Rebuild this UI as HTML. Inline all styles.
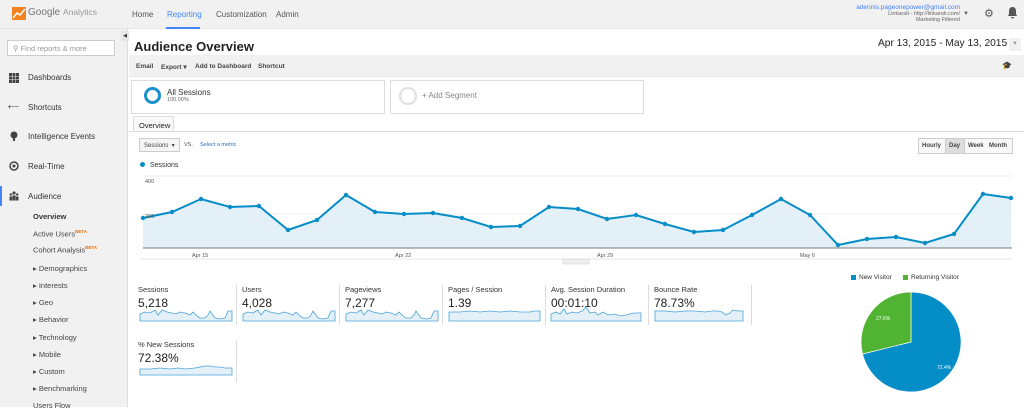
<!DOCTYPE html>
<html><head><meta charset="utf-8"><style>
*{margin:0;padding:0;box-sizing:border-box}
body{width:1024px;height:407px;overflow:hidden;font-family:"Liberation Sans",Arial,sans-serif;background:#fff;position:relative;color:#333}
.a{position:absolute}
.top{left:0;top:0;width:1024px;height:29px;background:#f1f1f1;border-bottom:1px solid #e5e5e5}
.nav{font-size:8px;color:#555;top:10px}
.side{left:0;top:29px;width:128px;height:378px;background:#f1f1f1;border-right:1px solid #ddd}
.si{font-size:8px;color:#333;left:28px}
.sub{font-size:7.5px;color:#444;left:33px}
.ic{left:9px;width:10px;height:10px}
.m{font-size:7.5px;color:#333}
.v{font-size:12px;color:#222}
.sep{width:1px;background:#ddd}
</style></head><body>
<div class="a top"></div>
<svg class="a" style="left:12px;top:7px" width="14" height="13" viewBox="0 0 14 13"><rect width="14" height="13" fill="#f58220"/><polyline points="1,11 5,6 8,8 13,2" stroke="#fff" stroke-width="1.5" fill="none"/></svg>
<div class="a" style="left:28px;top:7px;font-size:10px;color:#777">Google <span style="font-size:8.5px;color:#999">Analytics</span></div>
<div class="a nav" style="left:132px">Home</div>
<div class="a nav" style="left:167px;color:#4285f4">Reporting</div>
<div class="a" style="left:166px;top:27px;width:34px;height:2px;background:#4285f4"></div>
<div class="a nav" style="left:216px">Customization</div>
<div class="a nav" style="left:276px">Admin</div>
<div class="a" style="right:64px;top:4px;font-size:6.5px;color:#4285f4;text-align:right">adennis.pageonepower@gmail.com</div>
<div class="a" style="right:64px;top:11px;font-size:5.5px;color:#666;text-align:right">Linkarati - http://linkarati.com/<br>Marketing Filtered</div>
<div class="a" style="left:963px;top:11px;font-size:6px;color:#666">▼</div>
<div class="a" style="left:984px;top:7px;font-size:11px;color:#555">⚙</div>
<svg class="a" style="left:1007px;top:6px" width="11" height="13" viewBox="0 0 11 13"><path d="M5.5 1C3 1 2 3 2 5v3L1 10h9L9 8V5C9 3 8 1 5.5 1zM4 11h3a1.5 1.5 0 0 1-3 0z" fill="#555"/></svg>

<div class="a side"></div>
<div class="a" style="left:121px;top:31px;width:8px;height:10px;background:#e5e5e5;font-size:5px;color:#333;text-align:center;line-height:10px">◀</div>
<div class="a" style="left:7px;top:40px;width:108px;height:16px;background:#fff;border:1px solid #ccc;font-size:7.5px;color:#999;padding:3px 0 0 5px">⚲ Find reports &amp; more</div>
<svg class="a ic" style="top:73px" viewBox="0 0 10 10" fill="#444"><rect x="0" y="0" width="3" height="3"/><rect x="3.5" y="0" width="3" height="3"/><rect x="7" y="0" width="3" height="3"/><rect x="0" y="3.5" width="3" height="3"/><rect x="3.5" y="3.5" width="3" height="3"/><rect x="7" y="3.5" width="3" height="3"/><rect x="0" y="7" width="3" height="3"/><rect x="3.5" y="7" width="3" height="3"/><rect x="7" y="7" width="3" height="3"/></svg>
<div class="a si" style="top:73px">Dashboards</div>
<div class="a" style="left:8px;top:102px;font-size:8px;color:#444">⟵</div>
<div class="a si" style="top:103px">Shortcuts</div>
<svg class="a ic" style="top:131px" viewBox="0 0 10 10"><circle cx="5" cy="4" r="3.5" fill="#444"/><rect x="4" y="7" width="2" height="3" fill="#444"/></svg>
<div class="a si" style="top:132px">Intelligence Events</div>
<svg class="a ic" style="top:161px" viewBox="0 0 10 10"><circle cx="5" cy="5" r="4" fill="none" stroke="#444" stroke-width="1.5"/><circle cx="5" cy="5" r="1.5" fill="#444"/></svg>
<div class="a si" style="top:162px">Real-Time</div>
<div class="a" style="left:0;top:186px;width:2px;height:20px;background:#4285f4"></div>
<svg class="a ic" style="top:191px" viewBox="0 0 10 10" fill="#444"><circle cx="5" cy="2" r="1.6"/><circle cx="1.8" cy="3.5" r="1.2"/><circle cx="8.2" cy="3.5" r="1.2"/><rect x="3.3" y="4.5" width="3.4" height="5"/><rect x="0.5" y="5.5" width="2.5" height="4"/><rect x="7" y="5.5" width="2.5" height="4"/></svg>
<div class="a si" style="top:192px">Audience</div>
<div class="a sub" style="top:212px;font-weight:bold;color:#333">Overview</div>
<div class="a sub" style="top:229px">Active Users<sup style="font-size:4.5px;color:#e8710a;font-weight:bold">BETA</sup></div>
<div class="a sub" style="top:245px">Cohort Analysis<sup style="font-size:4.5px;color:#e8710a;font-weight:bold">BETA</sup></div>
<div class="a sub" style="top:264px">▸ Demographics</div>
<div class="a sub" style="top:281px">▸ Interests</div>
<div class="a sub" style="top:298px">▸ Geo</div>
<div class="a sub" style="top:315px">▸ Behavior</div>
<div class="a sub" style="top:333px">▸ Technology</div>
<div class="a sub" style="top:350px">▸ Mobile</div>
<div class="a sub" style="top:367px">▸ Custom</div>
<div class="a sub" style="top:384px">▸ Benchmarking</div>
<div class="a sub" style="top:401px">Users Flow</div>

<div class="a" style="left:134px;top:39px;font-size:13px;font-weight:bold;color:#222">Audience Overview</div>
<div class="a" style="left:878px;top:38px;font-size:10.2px;color:#222;white-space:nowrap">Apr 13, 2015 - May 13, 2015</div>
<div class="a" style="left:1009px;top:38px;width:12px;height:13px;background:#f1f1f1;font-size:6px;color:#999;text-align:center;line-height:13px">▼</div>
<div class="a" style="left:129px;top:55px;width:895px;height:22px;background:#f1f1f1;border-bottom:1px solid #e5e5e5"></div>
<div class="a" style="left:136px;top:63px;font-size:6.5px;font-weight:bold;color:#444">Email</div>
<div class="a" style="left:161px;top:63px;font-size:6.5px;font-weight:bold;color:#444">Export ▾</div>
<div class="a" style="left:195px;top:63px;font-size:6.5px;font-weight:bold;color:#444">Add to Dashboard</div>
<div class="a" style="left:258px;top:63px;font-size:6.5px;font-weight:bold;color:#444">Shortcut</div>
<div class="a" style="left:1002px;top:61px;font-size:8px;color:#444">🎓</div>

<div class="a" style="left:131px;top:80px;width:254px;height:34px;border:1px solid #ddd"></div>
<div class="a" style="left:144px;top:87px;width:17px;height:17px;border:3px solid #1a8fd0;border-radius:50%"></div>
<div class="a" style="left:167px;top:88px;font-size:8px;color:#333">All Sessions</div>
<div class="a" style="left:167px;top:97px;font-size:5.5px;color:#666">100.00%</div>
<div class="a" style="left:390px;top:80px;width:254px;height:34px;border:1px solid #ddd"></div>
<div class="a" style="left:399px;top:87px;width:18px;height:18px;border:2px solid #ddd;border-radius:50%"></div>
<div class="a" style="left:422px;top:91px;font-size:8px;color:#888">+ Add Segment</div>
<div class="a" style="left:133px;top:116px;width:41px;height:16px;border:1px solid #ddd;border-bottom:none;background:#f8f8f8;font-size:7.5px;color:#222;padding:4px 0 0 5px">Overview</div>
<div class="a" style="left:129px;top:131px;width:895px;height:1px;background:#ddd"></div>

<div class="a" style="left:139px;top:138px;width:41px;height:14px;border:1px solid #ccc;background:#f5f5f5;font-size:6px;color:#444;padding:3px 0 0 4px">Sessions &nbsp;▾</div>
<div class="a" style="left:184px;top:142px;font-size:5.5px;color:#555">VS.</div>
<div class="a" style="left:200px;top:142px;font-size:5.5px;color:#2a6ebb">Select a metric</div>
<div class="a" style="left:918px;top:138px;width:95px;height:16px;border:1px solid #ccc;background:#f8f8f8"></div>
<div class="a" style="left:922px;top:143px;font-size:6px;font-weight:bold;color:#444">Hourly</div>
<div class="a" style="left:945px;top:138px;width:20px;height:16px;background:#ddd;border:1px solid #ccc"></div>
<div class="a" style="left:949px;top:143px;font-size:6px;font-weight:bold;color:#444">Day</div>
<div class="a" style="left:968px;top:143px;font-size:6px;font-weight:bold;color:#444">Week</div>
<div class="a" style="left:989px;top:143px;font-size:6px;font-weight:bold;color:#444">Month</div>
<div class="a" style="left:140px;top:162px;width:5px;height:5px;border-radius:50%;background:#058dc7"></div>
<div class="a" style="left:150px;top:162px;font-size:7px;color:#333">Sessions</div>

<svg class="a" style="left:0;top:0" width="1024" height="270">
<line x1="143" y1="176" x2="1012" y2="176" stroke="#eee"/>
<line x1="143" y1="214" x2="1012" y2="214" stroke="#eee"/>
<polygon fill="#e4f0f8" points="143,248 143,218 172,212 201,199 230,207 259,206 288,230 317,220 346,195 375,212 404,214 433,213 462,218 491,227 520,226 549,207 578,209 607,219 636,215 665,224 694,232 723,230 752,215 781,199 810,215 838,245 867,239 896,237 925,243 954,234 983,194 1011,198 1011,248"/>
<polyline fill="none" stroke="#058dc7" stroke-width="2" points="143,218 172,212 201,199 230,207 259,206 288,230 317,220 346,195 375,212 404,214 433,213 462,218 491,227 520,226 549,207 578,209 607,219 636,215 665,224 694,232 723,230 752,215 781,199 810,215 838,245 867,239 896,237 925,243 954,234 983,194 1011,198"/>
<g fill="#058dc7"><circle cx="143" cy="218" r="2.2"/><circle cx="172" cy="212" r="2.2"/><circle cx="201" cy="199" r="2.2"/><circle cx="230" cy="207" r="2.2"/><circle cx="259" cy="206" r="2.2"/><circle cx="288" cy="230" r="2.2"/><circle cx="317" cy="220" r="2.2"/><circle cx="346" cy="195" r="2.2"/><circle cx="375" cy="212" r="2.2"/><circle cx="404" cy="214" r="2.2"/><circle cx="433" cy="213" r="2.2"/><circle cx="462" cy="218" r="2.2"/><circle cx="491" cy="227" r="2.2"/><circle cx="520" cy="226" r="2.2"/><circle cx="549" cy="207" r="2.2"/><circle cx="578" cy="209" r="2.2"/><circle cx="607" cy="219" r="2.2"/><circle cx="636" cy="215" r="2.2"/><circle cx="665" cy="224" r="2.2"/><circle cx="694" cy="232" r="2.2"/><circle cx="723" cy="230" r="2.2"/><circle cx="752" cy="215" r="2.2"/><circle cx="781" cy="199" r="2.2"/><circle cx="810" cy="215" r="2.2"/><circle cx="838" cy="245" r="2.2"/><circle cx="867" cy="239" r="2.2"/><circle cx="896" cy="237" r="2.2"/><circle cx="925" cy="243" r="2.2"/><circle cx="954" cy="234" r="2.2"/><circle cx="983" cy="194" r="2.2"/><circle cx="1011" cy="198" r="2.2"/></g>
<line x1="143" y1="248" x2="1012" y2="248" stroke="#777"/>
<line x1="140" y1="259" x2="1012" y2="259" stroke="#e5e5e5"/>
<g font-size="5.5" fill="#555" font-family="Liberation Sans"><text x="145" y="183">400</text><text x="145" y="218">200</text><text x="192" y="257">Apr 15</text><text x="395" y="257">Apr 22</text><text x="597" y="257">Apr 29</text><text x="800" y="257">May 6</text></g>
<rect x="563" y="259" width="26" height="5" fill="#eee" stroke="#ccc" stroke-width="0.5"/>
</svg>

<div class="a m" style="left:138px;top:285px">Sessions</div><div class="a v" style="left:138px;top:296px">5,218</div>
<div class="a sep" style="left:236px;top:285px;height:40px"></div>
<div class="a m" style="left:242px;top:285px">Users</div><div class="a v" style="left:242px;top:296px">4,028</div>
<div class="a sep" style="left:339px;top:285px;height:40px"></div>
<div class="a m" style="left:345px;top:285px">Pageviews</div><div class="a v" style="left:345px;top:296px">7,277</div>
<div class="a sep" style="left:442px;top:285px;height:40px"></div>
<div class="a m" style="left:448px;top:285px">Pages / Session</div><div class="a v" style="left:448px;top:296px">1.39</div>
<div class="a sep" style="left:545px;top:285px;height:40px"></div>
<div class="a m" style="left:551px;top:285px">Avg. Session Duration</div><div class="a v" style="left:551px;top:296px">00:01:10</div>
<div class="a sep" style="left:648px;top:285px;height:40px"></div>
<div class="a m" style="left:654px;top:285px">Bounce Rate</div><div class="a v" style="left:654px;top:296px">78.73%</div>
<div class="a sep" style="left:751px;top:285px;height:40px"></div>
<div class="a m" style="left:138px;top:340px">% New Sessions</div><div class="a v" style="left:138px;top:351px">72.38%</div>
<div class="a sep" style="left:236px;top:340px;height:42px"></div>
<svg class="a" style="left:0;top:0" width="760" height="407">
<g fill="#e4f0f8" stroke="#4ba3d8" stroke-width="0.8">
<path d="M140 321V314L145 312L150 313L155 310L158 315L162 310L167 312L172 313L176 314L180 312L185 313L190 315L193 312L197 316L200 318L205 318L208 315L210 311L215 318L220 319L225 318L228 311L232 311V321Z"/>
<path d="M243 321V314L248 312L253 313L258 310L261 315L265 310L270 312L275 313L279 314L283 312L288 313L293 315L296 312L300 316L303 318L308 318L311 315L313 311L318 318L323 319L328 318L331 311L335 311V321Z"/>
<path d="M346 321V314L351 312L356 313L361 310L364 315L368 310L373 312L378 313L382 314L386 312L391 313L396 315L399 312L403 316L406 318L411 318L414 315L416 311L421 318L426 319L431 318L434 311L438 311V321Z"/>
<path d="M449 321V312L460 312L470 311L480 312L490 311L500 312L510 311L520 312L530 312L535 311L540 311V321Z"/>
<path d="M551 321V314L556 312L560 314L564 309L567 314L572 312L577 313L582 311L586 307L590 313L595 312L598 315L603 312L608 315L615 314L620 316L626 315L630 314L634 313L638 313L641 313V321Z"/>
<path d="M655 321V311L665 311L675 312L685 311L695 311L705 312L712 311L718 311L722 312L726 315L730 313L733 310L738 311L743 311V321Z"/>
<path d="M140 375V369L150 369L160 368L170 369L178 368L185 369L195 368L200 367L205 366L210 366L215 367L220 367L225 368L232 368V375Z"/>
</g></svg>

<div class="a" style="left:851px;top:275px;width:5px;height:5px;background:#058dc7"></div>
<div class="a" style="left:859px;top:274px;font-size:6.5px;color:#333">New Visitor</div>
<div class="a" style="left:903px;top:275px;width:5px;height:5px;background:#50b432"></div>
<div class="a" style="left:911px;top:274px;font-size:6.5px;color:#333">Returning Visitor</div>
<svg class="a" style="left:850px;top:280px" width="130" height="127">
<path d="M61 62L61 12A50 50 0 1 1 12.5 74Z" fill="#058dc7" stroke="#fff" stroke-width="0.7"/>
<path d="M61 62L12.5 74A50 50 0 0 1 61 12Z" fill="#50b432" stroke="#fff" stroke-width="0.7"/>
<text x="26" y="40" font-size="5" fill="#fff" font-family="Liberation Sans">27.6%</text>
<text x="87" y="89" font-size="5" fill="#fff" font-family="Liberation Sans">72.4%</text>
</svg>
</body></html>
